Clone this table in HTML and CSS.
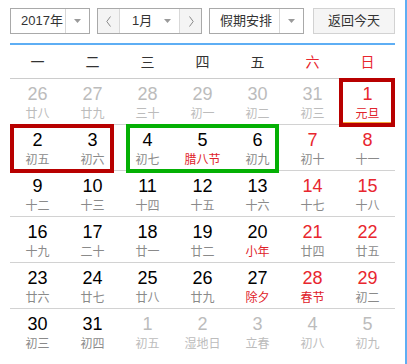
FILE: index.html
```html
<!DOCTYPE html>
<html lang="zh-CN">
<head>
<meta charset="utf-8">
<title>万年历</title>
<link rel="stylesheet" href="styles.css">
</head>
<body>
<div class="page">
  <div class="cal">
    <div class="toolbar">
      <div class="select year">
        <span class="sel-text">2017年</span>
        <span class="sel-arrow"><svg class="caret" width="7" height="4" viewBox="0 0 7 4"><polygon points="0,0 7,0 3.5,4" fill="#9a9a9a"/></svg></span>
      </div>
      <div class="month-ctl">
        <span class="nav prev"><svg width="6" height="11" viewBox="0 0 6 11"><polyline points="4.5,0.5 0.8,5.5 4.5,10.5" fill="none" stroke="#8a8a8a" stroke-width="1"/></svg></span>
        <span class="month-mid"><span class="sel-label">1月</span><svg class="caret" width="7" height="4" viewBox="0 0 7 4"><polygon points="0,0 7,0 3.5,4" fill="#9a9a9a"/></svg></span>
        <span class="nav next"><svg width="6" height="11" viewBox="0 0 6 11"><polyline points="1.5,0.5 5.2,5.5 1.5,10.5" fill="none" stroke="#8a8a8a" stroke-width="1"/></svg></span>
      </div>
      <div class="select holiday">
        <span class="sel-text">假期安排</span>
        <span class="sel-arrow"><svg class="caret" width="7" height="4" viewBox="0 0 7 4"><polygon points="0,0 7,0 3.5,4" fill="#9a9a9a"/></svg></span>
      </div>
      <div class="today">返回今天</div>
    </div>

    <div class="weekhead">
      <span>一</span><span>二</span><span>三</span><span>四</span><span>五</span><span class="we">六</span><span class="we">日</span>
    </div>

    <div class="week">
      <div class="cell other"><span class="num">26</span><span class="lun">廿八</span></div>
      <div class="cell other"><span class="num">27</span><span class="lun">廿九</span></div>
      <div class="cell other"><span class="num">28</span><span class="lun">三十</span></div>
      <div class="cell other"><span class="num">29</span><span class="lun">初一</span></div>
      <div class="cell other"><span class="num">30</span><span class="lun">初二</span></div>
      <div class="cell other"><span class="num">31</span><span class="lun">初三</span></div>
      <div class="cell wkend fest"><span class="num">1</span><span class="lun">元旦</span></div>
      <div class="box red col7 today-line"></div>
    </div>

    <div class="week">
      <div class="cell"><span class="num">2</span><span class="lun">初五</span></div>
      <div class="cell"><span class="num">3</span><span class="lun">初六</span></div>
      <div class="cell"><span class="num">4</span><span class="lun">初七</span></div>
      <div class="cell fest"><span class="num">5</span><span class="lun">腊八节</span></div>
      <div class="cell"><span class="num">6</span><span class="lun">初九</span></div>
      <div class="cell wkend"><span class="num">7</span><span class="lun">初十</span></div>
      <div class="cell wkend"><span class="num">8</span><span class="lun">十一</span></div>
      <div class="box red col1-2"></div>
      <div class="box green col3-5"></div>
    </div>

    <div class="week">
      <div class="cell"><span class="num">9</span><span class="lun">十二</span></div>
      <div class="cell"><span class="num">10</span><span class="lun">十三</span></div>
      <div class="cell"><span class="num">11</span><span class="lun">十四</span></div>
      <div class="cell"><span class="num">12</span><span class="lun">十五</span></div>
      <div class="cell"><span class="num">13</span><span class="lun">十六</span></div>
      <div class="cell wkend"><span class="num">14</span><span class="lun">十七</span></div>
      <div class="cell wkend"><span class="num">15</span><span class="lun">十八</span></div>
    </div>

    <div class="week">
      <div class="cell"><span class="num">16</span><span class="lun">十九</span></div>
      <div class="cell"><span class="num">17</span><span class="lun">二十</span></div>
      <div class="cell"><span class="num">18</span><span class="lun">廿一</span></div>
      <div class="cell"><span class="num">19</span><span class="lun">廿二</span></div>
      <div class="cell fest"><span class="num">20</span><span class="lun">小年</span></div>
      <div class="cell wkend"><span class="num">21</span><span class="lun">廿四</span></div>
      <div class="cell wkend"><span class="num">22</span><span class="lun">廿五</span></div>
    </div>

    <div class="week">
      <div class="cell"><span class="num">23</span><span class="lun">廿六</span></div>
      <div class="cell"><span class="num">24</span><span class="lun">廿七</span></div>
      <div class="cell"><span class="num">25</span><span class="lun">廿八</span></div>
      <div class="cell"><span class="num">26</span><span class="lun">廿九</span></div>
      <div class="cell fest"><span class="num">27</span><span class="lun">除夕</span></div>
      <div class="cell wkend fest"><span class="num">28</span><span class="lun">春节</span></div>
      <div class="cell wkend"><span class="num">29</span><span class="lun">初二</span></div>
    </div>

    <div class="week">
      <div class="cell"><span class="num">30</span><span class="lun">初三</span></div>
      <div class="cell"><span class="num">31</span><span class="lun">初四</span></div>
      <div class="cell other"><span class="num">1</span><span class="lun">初五</span></div>
      <div class="cell other"><span class="num">2</span><span class="lun">湿地日</span></div>
      <div class="cell other"><span class="num">3</span><span class="lun">立春</span></div>
      <div class="cell other"><span class="num">4</span><span class="lun">初八</span></div>
      <div class="cell other"><span class="num">5</span><span class="lun">初九</span></div>
    </div>
  </div>
</div>
</body>
</html>
```
FILE: styles.css
```css
* { box-sizing: border-box; }

html, body {
  margin: 0;
  padding: 0;
  background: #fff;
}

body {
  font-family: "Liberation Sans", "Noto Sans CJK SC", sans-serif;
  color: #333;
}

.page {
  width: 407px;
  height: 364px;
  border-right: 2px solid #5eaef4;
  padding: 8px 0 0 10px;
  overflow: hidden;
}

.cal {
  width: 385px;
}

/* ---------- toolbar ---------- */
.toolbar {
  display: flex;
  height: 26px;
}

.select {
  display: flex;
  border: 1px solid #a9a9a9;
  background: #fff;
}

.year { width: 80px; margin-right: 7px; }
.holiday { width: 95px; margin-right: 9px; }

.sel-text {
  flex: 1;
  padding-left: 10px;
  font-size: 13px;
  line-height: 24px;
  color: #333;
  white-space: nowrap;
}

.sel-arrow {
  width: 24px;
  border-left: 1px solid #d8d8d8;
  display: flex;
  align-items: center;
  justify-content: center;
}

.caret { display: block; }

.month-ctl {
  display: flex;
  width: 105px;
  margin-right: 7px;
  border: 1px solid #a9a9a9;
}

.nav {
  width: 22px;
  background: #f4f4f4;
  display: flex;
  align-items: center;
  justify-content: center;
}
.nav svg { display: block; }
.prev { border-right: 1px solid #d8d8d8; }
.next { border-left: 1px solid #d8d8d8; }

.month-mid {
  flex: 1;
  display: flex;
  align-items: center;
  justify-content: space-between;
  padding: 0 8px 0 12px;
  background: #fff;
}

.sel-label {
  font-size: 13px;
  line-height: 24px;
  color: #333;
}

.today {
  width: 82px;
  border: 1px solid #d2d2d2;
  background: #f5f5f5;
  font-size: 13px;
  line-height: 24px;
  text-align: center;
  color: #333;
}

/* ---------- week header ---------- */
.weekhead {
  margin-top: 9px;
  display: grid;
  grid-template-columns: repeat(7, 55px);
  border-top: 2px solid #5eaef4;
  border-bottom: 1px solid #cccccc;
  height: 36px;
  font-family: "Noto Sans CJK SC", sans-serif;
  font-size: 14px;
  line-height: 33px;
  text-align: center;
  color: #333;
}

.weekhead .we { color: #e8262e; }

/* ---------- weeks ---------- */
.week {
  display: grid;
  grid-template-columns: repeat(7, 55px);
  grid-template-rows: 45px;
  height: 46px;
  border-bottom: 1px solid #d2d2d2;
}

.week:last-child { border-bottom: none; }

.cell {
  grid-row: 1;
  display: flex;
  flex-direction: column;
  align-items: center;
  padding-top: 5px;
}

.cell:nth-child(1) { grid-column: 1; }
.cell:nth-child(2) { grid-column: 2; }
.cell:nth-child(3) { grid-column: 3; }
.cell:nth-child(4) { grid-column: 4; }
.cell:nth-child(5) { grid-column: 5; }
.cell:nth-child(6) { grid-column: 6; }
.cell:nth-child(7) { grid-column: 7; }

.num {
  font-family: "Liberation Sans", sans-serif;
  font-size: 18px;
  line-height: 20px;
  color: #000;
}

.lun {
  font-family: "Noto Sans CJK SC", sans-serif;
  font-size: 12px;
  line-height: 17px;
  color: #8a8a8a;
  white-space: nowrap;
}

.wkend .num { color: #e8262e; }
.fest .lun { color: #e0222a; }

.other .num,
.other .lun { color: #bcbcbc; }

/* ---------- holiday frames ---------- */
.box {
  grid-row: 1;
  margin-top: -1px;
  margin-bottom: -3px;
  border: 4px solid #b80000;
  pointer-events: none;
}

.box.red { border-color: #b80000; }
.box.green { border-color: #04b004; }

.col7 { grid-column: 7; margin-left: -1px; }
.col1-2 { grid-column: 1 / 3; margin-right: 6px; }
.col3-5 { grid-column: 3 / 6; margin-left: 6px; margin-right: 6px; }

.today-line { box-shadow: inset 0 -1px 0 #f2a83a; }
```
